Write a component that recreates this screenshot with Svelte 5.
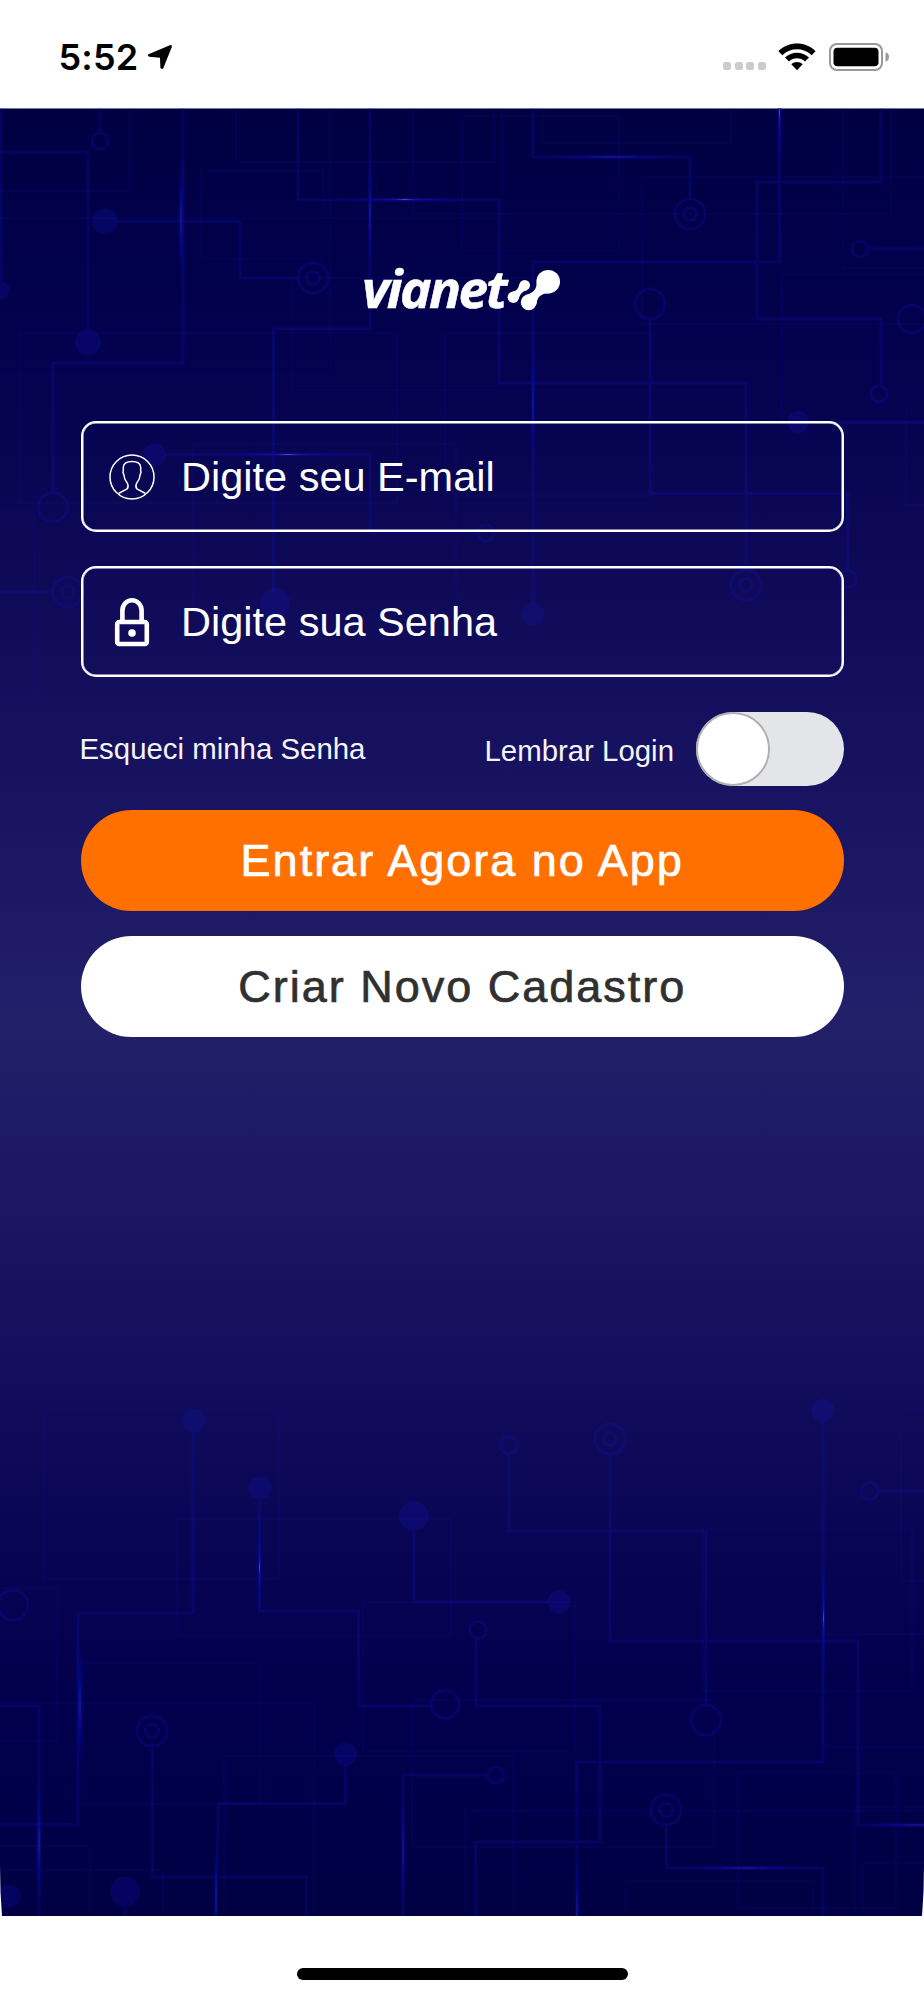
<script>
  // Circuit board artwork, in screen coordinates
  const boxes = [
    [20, 333, 377, 170], [-10, 90, 140, 101], [201, 171, 122, 88], [236, 90, 258, 72],
    [292, 278, 242, 112], [-10, 90, 340, 286], [-10, 90, 512, 128], [413, 90, 478, 124],
    [543, 90, 188, 53], [462, 116, 157, 135], [642, 177, 300, 147], [843, 90, 100, 178],
    [782, 274, 160, 148], [445, 333, 208, 163], [193, 444, 263, 170], [906, 388, 40, 117],
    [-10, 512, 44, 187], [44, 1410, 235, 169], [177, 1519, 274, 117], [363, 1602, 212, 149],
    [-10, 1588, 67, 153], [83, 1663, 177, 141], [-10, 1703, 324, 230], [412, 1700, 302, 147],
    [224, 1756, 289, 180], [-10, 1846, 100, 90], [-10, 1870, 173, 60], [703, 1528, 209, 163],
    [901, 1410, 60, 171], [823, 1634, 120, 113], [738, 1773, 158, 135], [465, 1811, 480, 130],
    [855, 1807, 80, 130], [863, 1863, 80, 80], [626, 1881, 187, 60]
  ];
  const traces = [
    'M100 108V132', 'M0 152H88V329', 'M183 108V363H53V493', 'M118 221H240V278H298',
    'M298 108V200H499V383H746V570', 'M370 108V329H273.5V592', 'M1 108V281',
    'M533 108V157H690V200', 'M779.5 108V262H533V603', 'M881 108V182H757V319H881V385',
    'M869 249H924', 'M650 319V493.5H847.500V570', 'M809 422.500H924', 'M165 454.500H370V533H477',
    'M0 592H53', 'M193 1432V1613H78V1824.500H0', 'M259.500 1499V1611H358.500V1706H430',
    'M414 1531V1602H548', 'M509 1454V1531H706V1705', 'M610 1454V1641H858V1825H924',
    'M823 1421V1762H577V1916', 'M879 1491H924', 'M476 1638V1706H600V1842H475.500V1916',
    'M0 1706H39V1916', 'M152.500 1746V1877H306.500V1916', 'M345.500 1765V1803.500H218.500L216 1916',
    'M487 1775H403V1916', 'M666.500 1825V1868H823V1916', 'M125 1907V1916'
  ];
  const dots = [
    [105, 221, 13], [88, 342, 13], [1, 290, 9], [798, 422, 11], [154.500, 455, 11.5],
    [275, 603, 15], [533, 614, 11.5], [193.500, 1421, 11.500], [259.500, 1488, 11.500],
    [414, 1516, 15], [559, 1602, 11.500], [823, 1410, 11.500], [345.500, 1754, 11.500],
    [9, 1896, 11.500], [125, 1891.500, 15]
  ];
  const rings = [
    [100, 141, 8], [650, 304, 15], [860, 249, 8], [879, 394, 8], [912, 319, 14],
    [53, 507, 14.5], [486, 533, 8], [848, 579, 8.5], [509, 1445, 8.5], [870, 1491, 8.500],
    [13, 1605, 15], [445, 1704.500, 14], [478, 1630, 8.500], [706, 1720, 15], [496, 1775, 8]
  ];
  const targets = [
    [313, 278], [690, 214], [746, 585], [68, 592], [610, 1439], [152, 1731], [666, 1810]
  ];
  // centre x, centre y, half width, half height
  const glows = [
    [181, 219, 3.5, 62], [370, 214, 2.5, 62], [533, 404, 2.5, 62], [405, 199.500, 70, 2.500],
    [612, 157, 62, 2.500], [288, 454.500, 80, 2.5], [779.500, 112, 2.5, 60], [259.500, 1567, 2.500, 50],
    [80, 1705, 3.5, 62], [39, 1842, 3.5, 62], [216, 1896, 2.500, 55], [403, 1850, 2.500, 62],
    [823.500, 1618, 2.500, 65], [745, 1868, 60, 2.500], [577, 1916, 2.500, 62], [918, 1825, 55, 2.500]
  ];
</script>

<div class="screen">
  <header>
    <div class="clock">
      <span>5:52</span>
      <svg width="26" height="26" viewBox="0 0 26 26"><path d="M1.500 10.200 22.800 1.200Q25.300.5 24.800 3L16.400 24Q15.200 26.200 13.400 24L13 13.800 2.300 12.700Q-.2 11.500 1.500 10.200Z" /></svg>
    </div>
    <div class="status">
      <div class="cell"><i></i><i></i><i></i><i></i></div>
      <svg width="38" height="28" viewBox="0 0 38 28">
        <path d="M.4 8.200C10.800-2 27.200-2 37.600 8.200L33.600 12.200C25.500 4.300 12.500 4.300 4.400 12.200Z" />
        <path d="M7 14.500C13.800 8 24.200 8 31 14.500L27 18.500C22.500 14.200 15.500 14.200 11 18.500Z" />
        <path d="M13.300 21.200C16.500 18.400 21.500 18.400 24.700 21.200L19 27.200Z" />
      </svg>
      <svg width="61" height="28" viewBox="0 0 61 28">
        <rect x="1" y="1" width="52" height="26" rx="7" fill="none" stroke="#999" stroke-width="2" />
        <rect x="4.500" y="4.700" width="45" height="18.600" rx="4" />
        <path d="M56.500 9.200Q60 10.500 60 14T56.500 18.800Z" fill="#999" />
      </svg>
    </div>
  </header>

  <main>
    <svg class="circuit" viewBox="0 108 924 1808" width="924" height="1808">
      <defs>
        <radialGradient id="glow">
          <stop offset="0" stop-color="#5c5ca8" stop-opacity=".85" />
          <stop offset=".14" stop-color="#1c1c90" stop-opacity=".7" />
          <stop offset=".5" stop-color="#0404a0" stop-opacity=".5" />
          <stop offset="1" stop-color="#0404a0" stop-opacity="0" />
        </radialGradient>
      </defs>
      <g class="boxes">
        {#each boxes as [x, y, w, h]}<rect {x} {y} width={w} height={h} />{/each}
      </g>
      <g class="traces">
        {#each traces as d}<path {d} />{/each}
        {#each rings as [x, y, r]}<circle cx={x} cy={y} {r} />{/each}
        {#each targets as [x, y]}
          <circle cx={x} cy={y} r="15" /><circle cx={x} cy={y} r="6.500" />
        {/each}
      </g>
      <g class="dots">
        {#each dots as [x, y, r]}<circle cx={x} cy={y} {r} />{/each}
      </g>
      {#each glows as [x, y, rx, ry]}<ellipse cx={x} cy={y} {rx} {ry} fill="url(#glow)" />{/each}
      <path d="M0 1866Q0 1892 2 1916H0ZM924 1866Q924 1892 922 1916H924Z" fill="#fff" />
    </svg>

    <svg class="logo" width="198" height="50" viewBox="0 0 198 50">
      <text x="-1" y="41" textLength="143" lengthAdjust="spacingAndGlyphs">vianet</text>
      <circle cx="150.300" cy="30.300" r="5.700" />
      <circle cx="161.700" cy="18.300" r="5.400" />
      <path d="M147.500 25.300C154 24.300 155 22 156.400 17.300L164.500 23C159 24.500 157 27 155.800 32.200Z" />
      <circle cx="165.700" cy="35.300" r="7.900" />
      <circle cx="185.200" cy="14.700" r="11.800" />
      <path d="M162.500 28C171 26 174 22 174 13L187 26.300C178 26 174 30 173.500 37.500Z" />
    </svg>

    <form>
      <div class="field">
        <svg width="46" height="46" viewBox="0 0 46 46" fill="none" stroke="#fff" stroke-width="1.500">
          <circle cx="23" cy="23" r="22" />
          <path d="M9.500 39.500 18 35Q20 33 18.500 29.500 15 25 14.800 20.500 13.500 19 14.300 16.500V13Q14.800 7.600 23 7.600T31.700 13V16.500Q32.500 19 31.200 20.500 31 25 27.500 29.500 26 33 28 35L36.500 39.500" />
        </svg>
        <span>Digite seu E-mail</span>
      </div>
      <div class="field">
        <svg width="46" height="50" viewBox="0 0 46 50" fill="none" stroke="#fff" stroke-width="4.600">
          <rect x="8.200" y="25" width="29.600" height="22" rx="2" />
          <path d="M13.400 25V13.500A9.600 10.200 0 0 1 32.600 13.500V25" />
          <circle cx="23" cy="36" r="3.800" fill="#fff" stroke="none" />
        </svg>
        <span>Digite sua Senha</span>
      </div>
      <div class="options">
        <span>Esqueci minha Senha</span>
        <div class="remember">
          <span>Lembrar Login</span>
          <div class="toggle"><i></i></div>
        </div>
      </div>
      <button type="button" class="primary">Entrar Agora no App</button>
      <button type="button" class="secondary">Criar Novo Cadastro</button>
    </form>
  </main>

  <footer><div></div></footer>
</div>

<style>
  :global(body) { margin: 0; background: #fff; }
  * { box-sizing: border-box; }
  .screen {
    width: 924px; height: 2000px; display: flex; flex-direction: column; overflow: hidden;
    font-family: "Liberation Sans", Arial, sans-serif; background: #fff;
  }
  svg { display: block; flex: none; }
  header { height: 108px; display: flex; justify-content: space-between; padding: 42px 34px 0 58.500px; }
  .clock { display: flex; gap: 8.500px; font: 600 36px/30px Inter, sans-serif; letter-spacing: .2px; }
  .clock svg { margin-top: 1.500px; }
  .status { display: flex; align-items: flex-start; }
  .status svg { margin: .5px 0 0 13px; }
  .cell { display: flex; gap: 3.600px; margin-top: 20px; }
  .cell i { width: 8px; height: 8px; border-radius: 2.500px; background: #ccc; }
  .cell + svg { margin-left: 12px; }

  main {
    position: relative; height: 1808px; display: flex; flex-direction: column; align-items: center;
    border-top: 1px solid #77779a;
    background: linear-gradient(#000043 0, #01004a 142px, #050350 292px, #0d0957 452px, #15105d 602px, #1c1765 762px, #222069 912px, #1b1763 1092px, #110d5c 1282px, #090655 1412px, #03004e 1562px, #00004a 1682px, #000043 1808px);
  }
  .circuit { position: absolute; left: 0; top: -1px; }
  .boxes rect { fill: none; stroke: #1818c0; stroke-width: 1.500; opacity: .13; }
  .traces { fill: none; stroke: #1414c4; stroke-width: 3; opacity: .21; }
  .dots { fill: #1414b8; opacity: .24; }
  .logo { position: relative; margin-top: 158px; overflow: visible; fill: #fff; }
  .logo text { font: italic 700 52px "Open Sans", sans-serif; letter-spacing: -2.500px; stroke: #fff; stroke-width: .5px; }

  form { position: relative; width: 763.500px; margin: 104px 0 0 .5px; }
  .field {
    height: 111px; margin-bottom: 34px; padding-left: 26.500px; display: flex; align-items: center;
    gap: 26px; border: 2px solid #fff; border-radius: 15px; color: #fff; font-size: 41.500px;
    box-shadow: inset 0 0 0 .5px #fff;
  }
  .field span { line-height: 48px; padding-top: 1px; }
  .options { height: 74px; margin-top: 35px; display: flex; align-items: center; justify-content: space-between; color: #f4f4fb; font-size: 29.400px; }
  .options > span { margin-left: -1px; }
  .remember { display: flex; align-items: center; gap: 22px; }
  .remember span { padding-top: 4px; }
  .toggle { width: 148px; height: 74px; border-radius: 37px; background: #e4e5e9; }
  .toggle i { display: block; width: 74px; height: 74px; border-radius: 50%; border: 2px solid #b0b0b2; background: #fff; }
  button {
    display: block; width: 100%; height: 101px; padding: 0; border: 0; border-radius: 51px;
    font: 45px/102px "Liberation Sans", Arial, sans-serif; letter-spacing: 2px; -webkit-text-stroke: .7px currentColor;
  }
  .primary { margin-top: 24px; background: #ff7000; color: #fff; }
  .secondary { margin-top: 25px; background: #fff; color: #303030; }
  footer { display: flex; justify-content: center; padding-top: 52px; }
  footer div { width: 331px; height: 12px; border-radius: 6px; background: #000; }
</style>
